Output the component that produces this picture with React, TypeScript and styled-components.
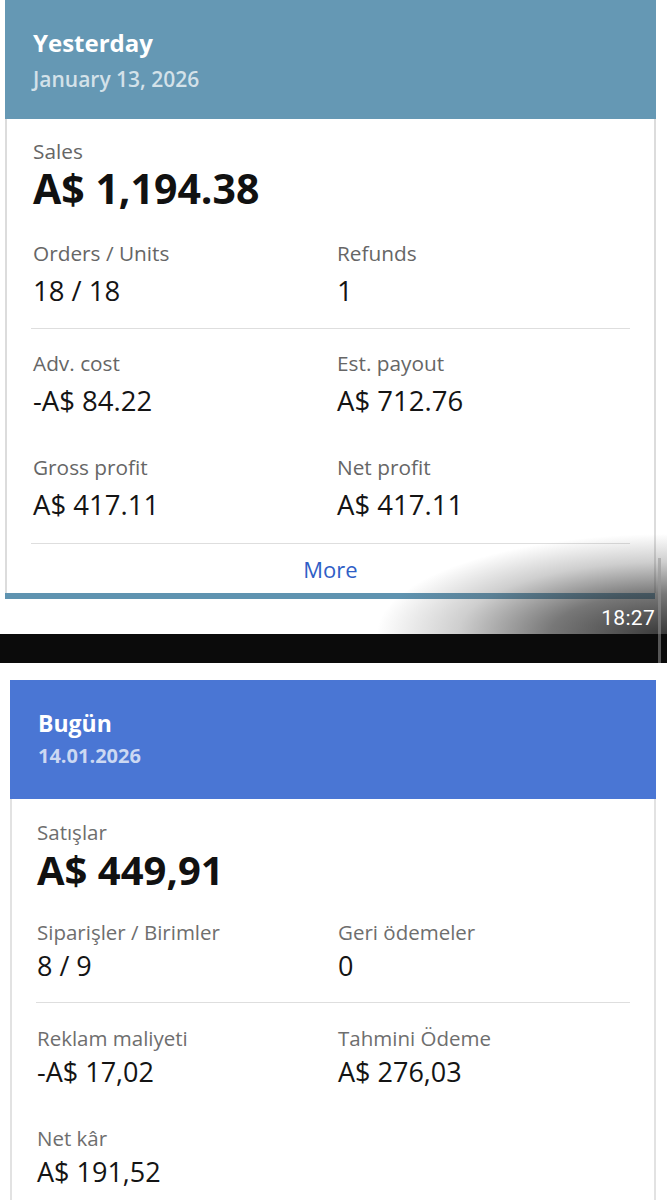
import React from "react";
import styled, { createGlobalStyle } from "styled-components";

const GlobalStyle = createGlobalStyle`
  html, body { margin: 0; padding: 0; background: #ffffff; }
  body {
    font-family: "Open Sans", "Noto Sans", "Liberation Sans", sans-serif;
    width: 667px;
    height: 1200px;
    overflow: hidden;
  }
  * { box-sizing: border-box; }
`;

type Metrics = {
  headerBg: string;
  left: number;
  width: number;
  border: string;
  headPadTop: number;
  headPadBottom: number;
  padX: number;
  titleSize: number;
  titleLine: number;
  dateSize: number;
  dateLine: number;
  dateGap: number;
  dateWeight: number;
  bodyPadTop: number;
  bodyPadX: number;
  indent: number;
  salesLabelSize: number;
  salesValueSize: number;
  salesValueGap: number;
  labelSize: number;
  labelColor: string;
  valueSize: number;
  valueLine: number;
  valueGap: number;
  firstGap: number;
  divTop: number;
  divBottom: number;
  rowGap: number;
  col: number;
};

const topMetrics: Metrics = {
  headerBg: "#6598b4",
  left: 5,
  width: 651,
  border: "#dcdcdc",
  headPadTop: 27,
  headPadBottom: 26,
  padX: 28,
  titleSize: 24,
  titleLine: 32,
  dateSize: 21,
  dateLine: 28,
  dateGap: 6,
  dateWeight: 600,
  bodyPadTop: 19,
  bodyPadX: 24,
  indent: 2,
  salesLabelSize: 20.8,
  salesValueSize: 41,
  salesValueGap: 2,
  labelSize: 20.8,
  labelColor: "#666666",
  valueSize: 27.5,
  valueLine: 34,
  valueGap: 8,
  firstGap: 30,
  divTop: 20,
  divBottom: 21,
  rowGap: 36,
  col: 304,
};

const bottomMetrics: Metrics = {
  headerBg: "#4a76d4",
  left: 10,
  width: 646,
  border: "#e2e2e2",
  headPadTop: 28,
  headPadBottom: 29,
  padX: 28,
  titleSize: 23,
  titleLine: 30,
  dateSize: 20,
  dateLine: 28,
  dateGap: 4,
  dateWeight: 700,
  bodyPadTop: 20,
  bodyPadX: 24,
  indent: 1,
  salesLabelSize: 20.5,
  salesValueSize: 40,
  salesValueGap: 3,
  labelSize: 20.5,
  labelColor: "#6e6e6e",
  valueSize: 27,
  valueLine: 32,
  valueGap: 5,
  firstGap: 27,
  divTop: 20,
  divBottom: 22,
  rowGap: 37,
  col: 301,
};

type M = { $m: Metrics };

const Page = styled.div`
  width: 667px;
  height: 1200px;
  overflow: hidden;
  background: #ffffff;
`;

const Shot = styled.div`
  position: relative;
  display: flex;
  flex-direction: column;
`;

const Card = styled.section<M>`
  margin-left: ${(p) => p.$m.left}px;
  width: ${(p) => p.$m.width}px;
  display: flex;
  flex-direction: column;
  background: #ffffff;
`;

const Header = styled.header<M>`
  background: ${(p) => p.$m.headerBg};
  padding: ${(p) => p.$m.headPadTop}px ${(p) => p.$m.padX}px
    ${(p) => p.$m.headPadBottom}px;
  display: flex;
  flex-direction: column;
  gap: ${(p) => p.$m.dateGap}px;
`;

const Title = styled.div<M>`
  color: #ffffff;
  font-weight: 700;
  font-size: ${(p) => p.$m.titleSize}px;
  line-height: ${(p) => p.$m.titleLine}px;
`;

const DateText = styled.div<M>`
  color: rgba(255, 255, 255, 0.72);
  font-weight: ${(p) => p.$m.dateWeight};
  font-size: ${(p) => p.$m.dateSize}px;
  line-height: ${(p) => p.$m.dateLine}px;
`;

const Body = styled.div<M & { $padBottom?: number }>`
  border-left: 2px solid ${(p) => p.$m.border};
  border-right: 2px solid ${(p) => p.$m.border};
  padding: ${(p) => p.$m.bodyPadTop}px ${(p) => p.$m.bodyPadX}px
    ${(p) => p.$padBottom ?? 0}px;
  display: flex;
  flex-direction: column;
`;

const SalesLabel = styled.div<M>`
  padding-left: ${(p) => p.$m.indent}px;
  color: ${(p) => p.$m.labelColor};
  font-size: ${(p) => p.$m.salesLabelSize}px;
  line-height: 26px;
`;

const SalesValue = styled.div<M>`
  padding-left: ${(p) => p.$m.indent}px;
  margin-top: ${(p) => p.$m.salesValueGap}px;
  color: #111111;
  font-weight: 700;
  font-size: ${(p) => p.$m.salesValueSize}px;
  line-height: 44px;
`;

const Section = styled.div<M & { $first?: boolean }>`
  display: grid;
  grid-template-columns: ${(p) => p.$m.col}px 1fr;
  row-gap: ${(p) => p.$m.rowGap}px;
  margin-top: ${(p) => (p.$first ? p.$m.firstGap : 0)}px;
`;

const Cell = styled.div<M>`
  display: flex;
  flex-direction: column;
  padding-left: ${(p) => p.$m.indent}px;
`;

const Label = styled.div<M>`
  color: ${(p) => p.$m.labelColor};
  font-size: ${(p) => p.$m.labelSize}px;
  line-height: 26px;
  white-space: nowrap;
`;

const Value = styled.div<M>`
  margin-top: ${(p) => p.$m.valueGap}px;
  color: #141414;
  font-size: ${(p) => p.$m.valueSize}px;
  line-height: ${(p) => p.$m.valueLine}px;
  white-space: nowrap;
`;

const Divider = styled.hr<{ $top: number; $bottom: number }>`
  border: none;
  height: 1px;
  background: #dedede;
  margin: ${(p) => p.$top}px 0 ${(p) => p.$bottom}px;
`;

const More = styled.a`
  display: flex;
  align-items: center;
  justify-content: center;
  height: 49px;
  color: #2f5ec6;
  font-size: 22px;
  text-decoration: none;
`;

const NextHeader = styled.div`
  margin-left: 5px;
  width: 650px;
  height: 6px;
  background: #5f93b0;
`;

const Seam = styled.div`
  height: 35px;
  display: flex;
  justify-content: flex-end;
  align-items: flex-start;
  padding: 7px 12px 0 0;
`;

const Clock = styled.span`
  position: relative;
  z-index: 2;
  color: #ffffff;
  font-family: Roboto, "Liberation Sans", sans-serif;
  font-weight: 400;
  font-size: 21px;
  line-height: 24px;
  letter-spacing: 0.3px;
`;

const BlackBar = styled.div`
  height: 29px;
  background: #0b0b0b;
`;

const Shade = styled.div`
  position: absolute;
  right: 0;
  bottom: 29px;
  width: 290px;
  height: 100px;
  pointer-events: none;
  z-index: 1;
  background: radial-gradient(
    ellipse 290px 100px at 100% 100%,
    rgba(40, 40, 40, 0.92) 0%,
    rgba(55, 55, 55, 0.68) 40%,
    rgba(80, 80, 80, 0.28) 72%,
    rgba(120, 120, 120, 0) 100%
  );
`;

const EdgeLine = styled.div`
  position: absolute;
  right: 6px;
  bottom: 0;
  width: 3px;
  height: 105px;
  background: rgba(150, 150, 150, 0.55);
  z-index: 2;
`;

const Spacer = styled.div`
  height: 17px;
`;

type Item = { label: string; value: string };

type CardData = {
  title: string;
  date: string;
  salesLabel: string;
  sales: string;
  first: Item[];
  rest: Item[];
  more?: string;
};

const yesterday: CardData = {
  title: "Yesterday",
  date: "January 13, 2026",
  salesLabel: "Sales",
  sales: "A$ 1,194.38",
  first: [
    { label: "Orders / Units", value: "18 / 18" },
    { label: "Refunds", value: "1" },
  ],
  rest: [
    { label: "Adv. cost", value: "-A$ 84.22" },
    { label: "Est. payout", value: "A$ 712.76" },
    { label: "Gross profit", value: "A$ 417.11" },
    { label: "Net profit", value: "A$ 417.11" },
  ],
  more: "More",
};

const today: CardData = {
  title: "Bugün",
  date: "14.01.2026",
  salesLabel: "Satışlar",
  sales: "A$ 449,91",
  first: [
    { label: "Siparişler / Birimler", value: "8 / 9" },
    { label: "Geri ödemeler", value: "0" },
  ],
  rest: [
    { label: "Reklam maliyeti", value: "-A$ 17,02" },
    { label: "Tahmini Ödeme", value: "A$ 276,03" },
    { label: "Net kâr", value: "A$ 191,52" },
  ],
};

function Stat({ item, m }: { item: Item; m: Metrics }) {
  return (
    <Cell $m={m}>
      <Label $m={m}>{item.label}</Label>
      <Value $m={m}>{item.value}</Value>
    </Cell>
  );
}

function SummaryCard({ data, m }: { data: CardData; m: Metrics }) {
  return (
    <Card $m={m}>
      <Header $m={m}>
        <Title $m={m}>{data.title}</Title>
        <DateText $m={m}>{data.date}</DateText>
      </Header>
      <Body $m={m} $padBottom={data.more ? 0 : 40}>
        <SalesLabel $m={m}>{data.salesLabel}</SalesLabel>
        <SalesValue $m={m}>{data.sales}</SalesValue>
        <Section $m={m} $first>
          {data.first.map((it) => (
            <Stat key={it.label} item={it} m={m} />
          ))}
        </Section>
        <Divider $top={m.divTop} $bottom={m.divBottom} />
        <Section $m={m}>
          {data.rest.map((it) => (
            <Stat key={it.label} item={it} m={m} />
          ))}
        </Section>
        {data.more && (
          <>
            <Divider $top={21} $bottom={0} />
            <More href="#">{data.more}</More>
          </>
        )}
      </Body>
    </Card>
  );
}

export default function App() {
  return (
    <>
      <GlobalStyle />
      <Page>
        <Shot>
          <SummaryCard data={yesterday} m={topMetrics} />
          <NextHeader />
          <Seam>
            <Clock>18:27</Clock>
          </Seam>
          <BlackBar />
          <Shade />
          <EdgeLine />
        </Shot>
        <Spacer />
        <SummaryCard data={today} m={bottomMetrics} />
      </Page>
    </>
  );
}
